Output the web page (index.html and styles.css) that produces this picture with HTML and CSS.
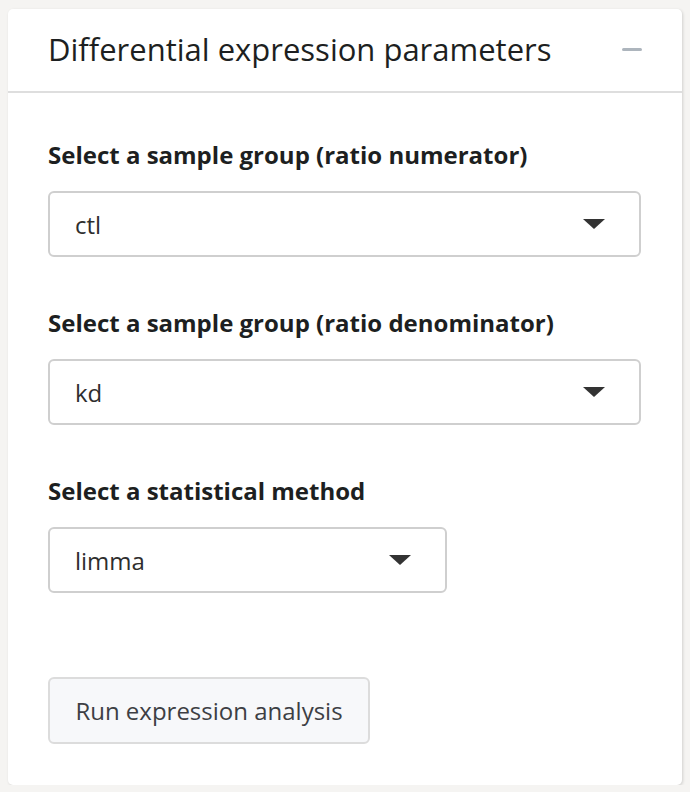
FILE: index.html
```html
<!DOCTYPE html>
<html>
<head>
<meta charset="utf-8">
<link rel="stylesheet" href="styles.css">
</head>
<body>
<div class="card">
  <div class="card-header">
    <span class="card-title">Differential expression parameters</span>
    <span class="collapse"></span>
  </div>
  <div class="card-body">
    <div class="field">
      <label class="label">Select a sample group (ratio numerator)</label>
      <div class="select full"><span>ctl</span><span class="caret"></span></div>
    </div>
    <div class="field">
      <label class="label">Select a sample group (ratio denominator)</label>
      <div class="select full"><span>kd</span><span class="caret"></span></div>
    </div>
    <div class="field">
      <label class="label">Select a statistical method</label>
      <div class="select narrow"><span>limma</span><span class="caret"></span></div>
    </div>
    <button class="btn">Run expression analysis</button>
  </div>
</div>
</body>
</html>
```
FILE: styles.css
```css
html, body {
  margin: 0;
  padding: 0;
  background: #f5f4f2;
}
body {
  padding: 9px 8px 0 8px;
  font-family: "Open Sans", "Noto Sans", sans-serif;
  color: #1d1f21;
}
.card {
  width: 674px;
  height: 776px;
  box-sizing: border-box;
  background: #fff;
  border-radius: 5px;
  box-shadow: 1px 1px 3px rgba(0,0,0,0.15);
  display: flex;
  flex-direction: column;
}
.card-header {
  height: 84px;
  box-sizing: border-box;
  border-bottom: 2px solid #dedede;
  display: flex;
  align-items: center;
  justify-content: space-between;
  padding: 0 40px 0 40px;
}
.card-title {
  font-size: 31px;
  font-weight: 400;
  color: #1d1f21;
  margin-top: -2px;
}
.collapse {
  width: 20px;
  height: 3px;
  background: #adb5bd;
  border-radius: 2px;
  margin-top: -2px;
}
.card-body {
  padding: 48px 40px 0 40px;
  display: flex;
  flex-direction: column;
  align-items: flex-start;
}
.field {
  margin-bottom: 52px;
}
.label {
  display: block;
  font-weight: 700;
  font-size: 24px;
  line-height: 28px;
  margin-bottom: 22px;
  color: #1d1f21;
}
.select {
  height: 66px;
  box-sizing: border-box;
  border: 2px solid #cfcfcf;
  border-radius: 6px;
  display: flex;
  align-items: center;
  justify-content: space-between;
  padding: 0 34px 0 25px;
  font-size: 24px;
  color: #2e2e2e;
}
.select.full { width: 593px; }
.select.narrow { width: 399px; }
.caret {
  width: 0;
  height: 0;
  border-left: 11px solid transparent;
  border-right: 11px solid transparent;
  border-top: 10px solid #333;
}
.btn {
  display: block;
  margin-top: 32px;
  height: 67px;
  width: 322px;
  box-sizing: border-box;
  background: #f7f8fa;
  border: 2px solid #dcdcdc;
  border-radius: 6px;
  font-family: inherit;
  font-size: 24px;
  color: #3d3f44;
  padding: 0;
}
```
